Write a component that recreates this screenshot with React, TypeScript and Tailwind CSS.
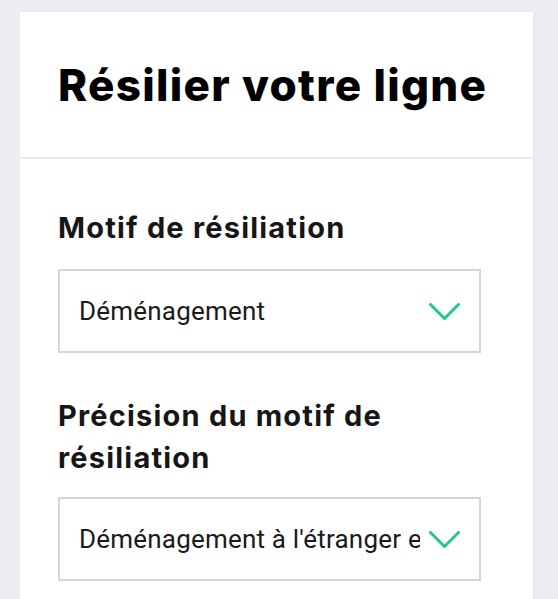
import React from "react";

function Chevron() {
  return (
    <svg width="31" height="17" viewBox="0 0 31 17" fill="none" className="shrink-0">
      <path d="M1.5 1.5 L15.5 15.5 L29.5 1.5" stroke="#23c98c" strokeWidth="3" strokeLinecap="round" strokeLinejoin="round" />
    </svg>
  );
}

function Select({ value }: { value: string }) {
  return (
    <div className="flex h-[84px] w-[423px] items-center border-2 border-[#d6d6d6] bg-white pl-[19px] pr-[19px]">
      <div className="min-w-0 flex-1 overflow-hidden whitespace-nowrap text-[26px] leading-[39px] tracking-[0.2px] text-[#1b1b1b] [font-family:Roboto,sans-serif]">
        {value}
      </div>
      <div className="ml-[9px] flex">
        <Chevron />
      </div>
    </div>
  );
}

export default function App() {
  return (
    <div className="min-h-screen bg-[#eceef1] pt-[12px] pl-[20px] [font-family:Inter,sans-serif]">
      <div className="w-[513px] bg-white shadow-[1px_0_4px_rgba(0,0,0,0.04)]">
        <div className="flex h-[147px] items-center border-b-2 border-[#ebebeb] px-[38px]">
          <h1 className="text-[44px] font-extrabold leading-none tracking-[1.3px] text-black">
            Résilier votre ligne
          </h1>
        </div>
        <div className="px-[38px] pt-[48px] pb-[40px]">
          <label className="block w-[423px] text-[29px] font-bold leading-[42px] tracking-[1.2px] text-[#161616]">
            Motif de résiliation
          </label>
          <div className="mt-[20px]">
            <Select value="Déménagement" />
          </div>
          <label className="mt-[42px] block w-[423px] text-[29px] font-bold leading-[42px] tracking-[1.2px] text-[#161616]">
            Précision du motif de résiliation
          </label>
          <div className="mt-[18px]">
            <Select value="Déménagement à l'étranger et DOM-TOM" />
          </div>
        </div>
      </div>
    </div>
  );
}
